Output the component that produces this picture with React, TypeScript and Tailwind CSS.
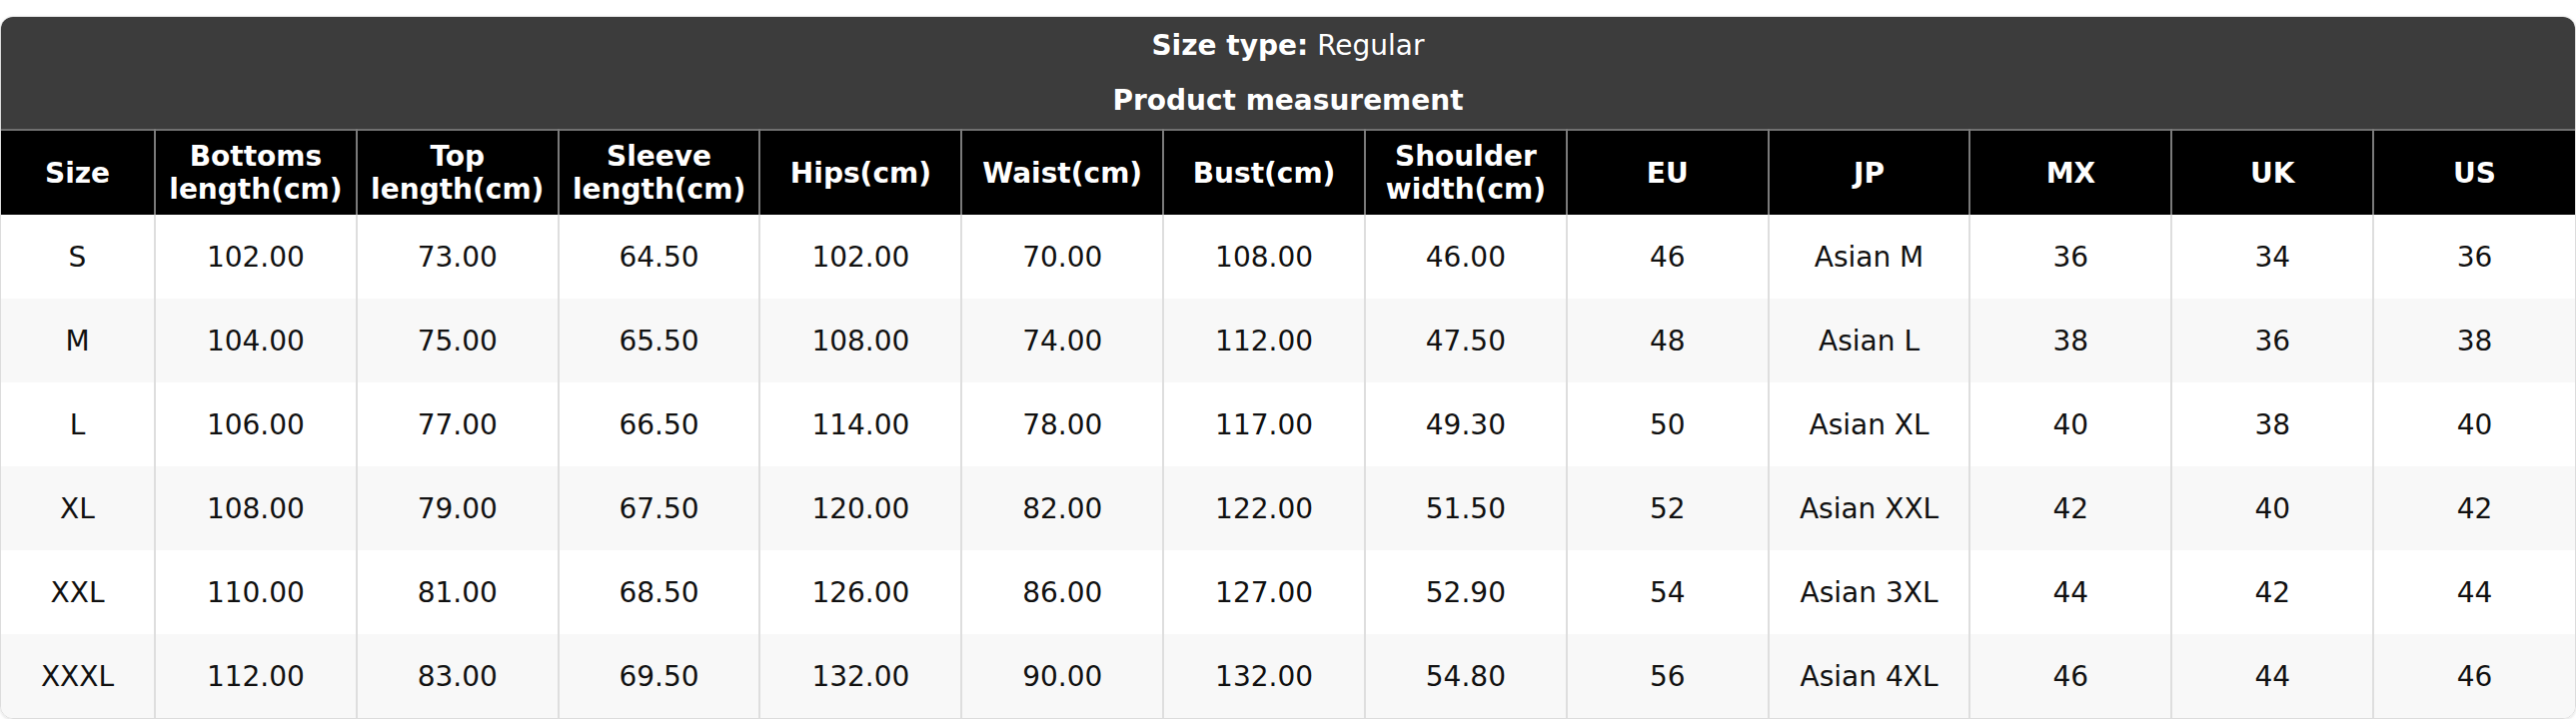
const headers = [
  ["Size"],
  ["Bottoms", "length(cm)"],
  ["Top", "length(cm)"],
  ["Sleeve", "length(cm)"],
  ["Hips(cm)"],
  ["Waist(cm)"],
  ["Bust(cm)"],
  ["Shoulder", "width(cm)"],
  ["EU"],
  ["JP"],
  ["MX"],
  ["UK"],
  ["US"],
]

const rows = [
  ["S", "102.00", "73.00", "64.50", "102.00", "70.00", "108.00", "46.00", "46", "Asian M", "36", "34", "36"],
  ["M", "104.00", "75.00", "65.50", "108.00", "74.00", "112.00", "47.50", "48", "Asian L", "38", "36", "38"],
  ["L", "106.00", "77.00", "66.50", "114.00", "78.00", "117.00", "49.30", "50", "Asian XL", "40", "38", "40"],
  ["XL", "108.00", "79.00", "67.50", "120.00", "82.00", "122.00", "51.50", "52", "Asian XXL", "42", "40", "42"],
  ["XXL", "110.00", "81.00", "68.50", "126.00", "86.00", "127.00", "52.90", "54", "Asian 3XL", "44", "42", "44"],
  ["XXXL", "112.00", "83.00", "69.50", "132.00", "90.00", "132.00", "54.80", "56", "Asian 4XL", "46", "44", "46"],
]

export default function App() {
  return (
    <div className="bg-white pt-[16px] font-['DejaVu_Sans',sans-serif]">
      <div className="rounded-[13px] overflow-hidden border border-[#dcdcdc] shadow-[0_1px_3px_rgba(0,0,0,0.12)]">
        <div className="bg-[#3c3c3c] text-white text-[28px] leading-[32px] h-[112px] flex flex-col">
          <div className="h-[55px] flex items-end justify-center pb-[10px]">
            <span className="font-bold">Size type:</span>
            <span className="ml-[9px]">Regular</span>
          </div>
          <div className="h-[57px] flex items-center justify-center font-bold">Product measurement</div>
        </div>
        <table className="w-full table-fixed border-collapse text-[28px] leading-[33px]">
          <colgroup>
            <col className="w-[154px]" />
            {headers.slice(1).map((_, i) => (
              <col key={i} />
            ))}
          </colgroup>
          <thead>
            <tr className="bg-black text-white h-[85px] border-t-2 border-[#6f6f6f]">
              {headers.map((h, i) => (
                <th
                  key={i}
                  className={`font-bold text-center align-middle ${i > 0 ? "border-l-2 border-[#7a7a7a]" : ""}`}
                >
                  {h.map((line, j) => (
                    <div key={j}>{line}</div>
                  ))}
                </th>
              ))}
            </tr>
          </thead>
          <tbody>
            {rows.map((r, ri) => (
              <tr key={ri} className={`h-[84px] ${ri % 2 === 1 ? "bg-[#f8f8f8]" : "bg-white"}`}>
                {r.map((c, ci) => (
                  <td
                    key={ci}
                    className={`text-center align-middle text-[#111] ${ci > 0 ? "border-l-2 border-[#dedede]" : ""}`}
                  >
                    {c}
                  </td>
                ))}
              </tr>
            ))}
          </tbody>
        </table>
      </div>
    </div>
  )
}
